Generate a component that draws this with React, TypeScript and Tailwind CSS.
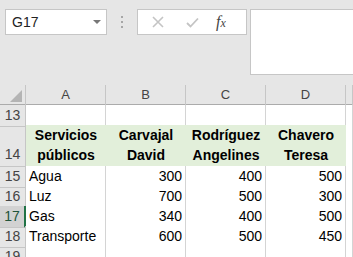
const cols = ['A', 'B', 'C', 'D', ''];

const rows = [
  { n: 15, label: 'Agua', vals: [300, 400, 500] },
  { n: 16, label: 'Luz', vals: [700, 500, 300] },
  { n: 17, label: 'Gas', vals: [340, 400, 500], selected: true },
  { n: 18, label: 'Transporte', vals: [600, 500, 450] },
];

const heads = [
  ['Servicios', 'públicos'],
  ['Carvajal', 'David'],
  ['Rodríguez', 'Angelines'],
  ['Chavero', 'Teresa'],
];

const grid = 'grid grid-cols-[26px_80px_80px_80px_80px_1fr]';

const App = () => {
  return (
    <div className="w-[353px] h-[257px] overflow-hidden bg-[#e6e6e6] font-['Liberation_Sans',sans-serif] text-[14px] text-black">
      {/* formula bar area */}
      <div className="h-[85px] flex items-start pt-[9px] pl-[5px]">
        <div className="w-[102px] h-[26px] bg-white border border-[#c6c6c6] flex items-center justify-between pl-[6px] pr-[5px] text-[#222]">
          <span>G17</span>
          <span className="w-0 h-0 border-l-[4px] border-r-[4px] border-t-[4px] border-l-transparent border-r-transparent border-t-[#777]" />
        </div>
        <div className="w-[30px] h-[26px] flex flex-col items-center justify-center gap-[3px]">
          <span className="w-[2px] h-[2px] bg-[#a6a6a6]" />
          <span className="w-[2px] h-[2px] bg-[#a6a6a6]" />
          <span className="w-[2px] h-[2px] bg-[#a6a6a6]" />
        </div>
        <div className="w-[110px] h-[26px] bg-white border border-[#c6c6c6] flex items-center">
          <svg width="12" height="12" viewBox="0 0 12 12" className="ml-[14px]">
            <path d="M1 1 L11 11 M11 1 L1 11" stroke="#c4c4c4" strokeWidth="1.6" />
          </svg>
          <svg width="13" height="11" viewBox="0 0 13 11" className="ml-[22px]">
            <path d="M1 6 L4.5 9.5 L12 1.5" stroke="#c4c4c4" strokeWidth="1.8" fill="none" />
          </svg>
          <span className="ml-[17px] font-['Liberation_Serif',serif] italic text-[16px] text-[#444] leading-none">
            f<span className="text-[12px]">x</span>
          </span>
        </div>
        <div className="ml-[3px] flex-1 h-[66px] bg-white border border-[#c6c6c6] border-r-0" />
      </div>

      {/* column headers */}
      <div className={`${grid} h-[20px] border-b border-[#ababab]`}>
        <div className="border-r border-[#c6c6c6] relative">
          <svg width="12" height="12" viewBox="0 0 12 12" className="absolute right-[3px] bottom-[3px]">
            <path d="M12 0 L12 12 L0 12 Z" fill="#b4b4b4" />
          </svg>
        </div>
        {cols.map((c, i) => (
          <div key={i} className="border-r border-[#c6c6c6] flex items-center justify-center text-[13px] text-[#444]">
            {c}
          </div>
        ))}
      </div>

      {/* row 13 */}
      <div className={`${grid} h-[20px]`}>
        <div className="border-r border-b border-[#c6c6c6] flex items-center justify-center text-[#444]">13</div>
        {cols.map((_, i) => (
          <div key={i} className="bg-white border-r border-b border-[#d4d4d4]" />
        ))}
      </div>

      {/* row 14 */}
      <div className={`${grid} h-[41px]`}>
        <div className="border-r border-b border-[#c6c6c6] flex items-end justify-center text-[#444] pb-[1px]">14</div>
        {heads.map((h, i) => (
          <div key={i} className="bg-[#e2efda] border-b border-[#e2efda] flex flex-col items-center justify-end font-bold leading-[20px] pb-[1px]">
            <span>{h[0]}</span>
            <span>{h[1]}</span>
          </div>
        ))}
        <div className="bg-white border-r border-b border-[#d4d4d4]" />
      </div>

      {rows.map(r => (
        <div key={r.n} className={`${grid} h-[20px]`}>
          <div
            className={`border-b border-[#c6c6c6] flex items-center justify-center ${
              r.selected ? 'bg-[#d2d2d2] text-[#21533a] border-r-2 border-r-[#217346]' : 'text-[#444] border-r'
            }`}
          >
            {r.n}
          </div>
          <div className="bg-white border-r border-b border-[#d4d4d4] flex items-center pl-[3px] whitespace-nowrap">{r.label}</div>
          {r.vals.map((v, i) => (
            <div key={i} className="bg-white border-r border-b border-[#d4d4d4] flex items-center justify-end pr-[3px]">
              {v}
            </div>
          ))}
          <div className="bg-white border-r border-b border-[#d4d4d4]" />
        </div>
      ))}

      {/* row 19 */}
      <div className={`${grid} h-[20px]`}>
        <div className="border-r border-b border-[#c6c6c6] flex items-center justify-center text-[#444]">19</div>
        {cols.map((_, i) => (
          <div key={i} className="bg-white border-r border-b border-[#d4d4d4]" />
        ))}
      </div>
    </div>
  );
};

export default App;
